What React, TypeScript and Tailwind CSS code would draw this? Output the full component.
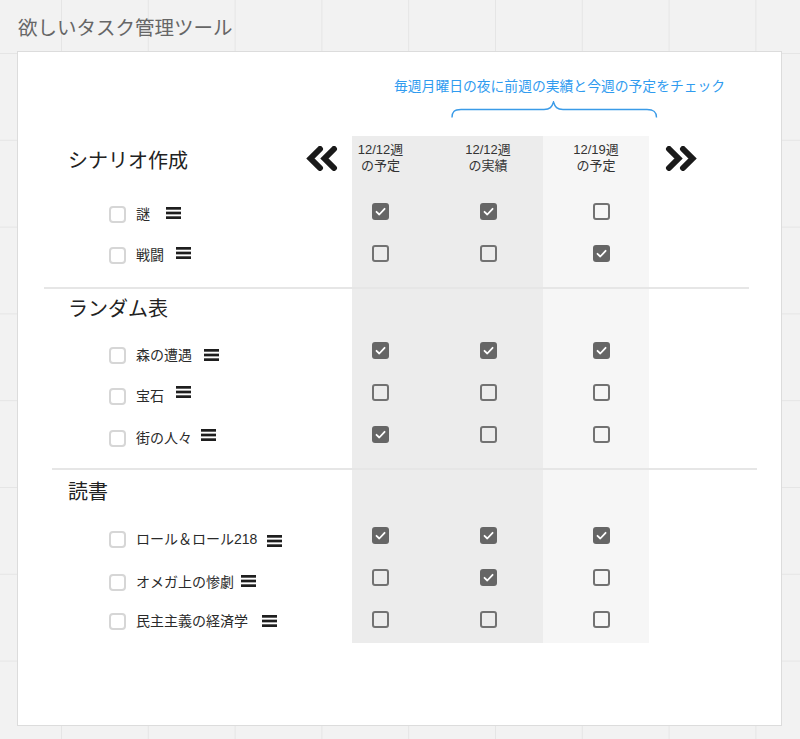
import type { ReactNode } from "react";

const SANS = "font-['Liberation_Sans','Noto_Sans_CJK_JP',sans-serif]";

type Item = { name: string; checks: boolean[]; itemCls: string; hamCls: string };

const SECTIONS: { title: string; titleH: string; items: Item[] }[] = [
  {
    title: "シナリオ作成",
    titleH: "",
    items: [
      { name: "謎", checks: [true, true, false], itemCls: "translate-y-[3px]", hamCls: "ml-[16px] -translate-y-[1px]" },
      { name: "戦闘", checks: [false, false, true], itemCls: "translate-y-[2px]", hamCls: "ml-[12px] -translate-y-[2px]" },
    ],
  },
  {
    title: "ランダム表",
    titleH: "h-[40px]",
    items: [
      { name: "森の遭遇", checks: [true, true, true], itemCls: "translate-y-[5px]", hamCls: "ml-[12px]" },
      { name: "宝石", checks: [false, false, false], itemCls: "translate-y-[4px]", hamCls: "ml-[12px] -translate-y-[4px]" },
      { name: "街の人々", checks: [true, false, false], itemCls: "translate-y-[4px]", hamCls: "ml-[9px] -translate-y-[3px]" },
    ],
  },
  {
    title: "読書",
    titleH: "h-[44px]",
    items: [
      { name: "ロール＆ロール218", checks: [true, true, true], itemCls: "translate-y-[4px]", hamCls: "ml-[10px] translate-y-[2px]" },
      { name: "オメガ上の惨劇", checks: [false, true, false], itemCls: "translate-y-[5px]", hamCls: "ml-[7px] -translate-y-[1px]" },
      { name: "民主主義の経済学", checks: [false, false, false], itemCls: "translate-y-[2px]", hamCls: "ml-[14px]" },
    ],
  },
];

function Cells({ a, b, c, d, e, h }: { a?: ReactNode; b?: ReactNode; c?: ReactNode; d?: ReactNode; e?: ReactNode; h: string }) {
  return (
    <>
      <div className={`${h} flex items-center`}>{a}</div>
      <div className="bg-[#ececec] flex items-center justify-center">{b}</div>
      <div className="bg-[#ececec] pl-6 flex items-center justify-center">{c}</div>
      <div className="bg-[#f6f6f6] pl-[10px] flex items-center justify-center">{d}</div>
      <div className="flex items-center">{e}</div>
    </>
  );
}

function Box({ on }: { on: boolean }) {
  return on ? (
    <div className="w-[17px] h-[17px] rounded-[3px] bg-[#666] flex items-center justify-center">
      <svg width="17" height="17" viewBox="0 0 17 17">
        <polyline points="4.5,8.8 7.3,11.5 12.6,5.8" fill="none" stroke="#fff" strokeWidth="1.8" strokeLinecap="round" strokeLinejoin="round" />
      </svg>
    </div>
  ) : (
    <div className="w-[17px] h-[17px] rounded-[3px] border-2 border-[#727272]" />
  );
}

function Hamburger({ cls }: { cls: string }) {
  return (
    <svg className={cls} width="15" height="12" viewBox="0 0 15 12">
      <rect x="0" y="0" width="15" height="2.7" fill="#1e1e1e" />
      <rect x="0" y="4.65" width="15" height="2.7" fill="#1e1e1e" />
      <rect x="0" y="9.3" width="15" height="2.7" fill="#1e1e1e" />
    </svg>
  );
}

function Chevrons({ dir, cls }: { dir: "left" | "right"; cls: string }) {
  const pts =
    dir === "left"
      ? ["15,3 5.5,12.5 15,22", "29,3 19.5,12.5 29,22"]
      : ["4,3 13.5,12.5 4,22", "18,3 27.5,12.5 18,22"];
  return (
    <svg className={cls} width="33" height="25" viewBox="0 0 33 25">
      {pts.map((p) => (
        <polyline key={p} points={p} fill="none" stroke="#1a1a1a" strokeWidth="6" strokeLinecap="round" strokeLinejoin="miter" />
      ))}
    </svg>
  );
}

function HeadText({ a, b, cls = "" }: { a: string; b: string; cls?: string }) {
  return (
    <div className={`self-start pt-[6px] text-center text-[13px] leading-[16px] text-[#333] ${cls}`}>
      {a}
      <br />
      {b}
    </div>
  );
}

export default function App() {
  return (
    <div
      className={`min-h-screen bg-[#f2f2f2] bg-[image:linear-gradient(90deg,#e5e5e5_1px,transparent_1px),linear-gradient(180deg,#e5e5e5_1px,transparent_1px)] bg-size-[86.8px_86.8px] bg-position-[61px_53px] pt-[14px] px-[17px] ${SANS}`}
    >
      <h1 className="pl-[1px] text-[19.5px] leading-[28px] text-[#666]">欲しいタスク管理ツール</h1>

      <div className="mt-[9px] h-[675px] w-[765px] bg-white border border-[#dcdcdc]">
        {/* annotation */}
        <div className="pt-[25px] pl-[376px] text-[13.8px] leading-[20px] text-[#2f9bef] whitespace-nowrap">
          毎週月曜日の夜に前週の実績と今週の予定をチェック
        </div>
        <svg className="mt-[4px] ml-[433px]" width="207" height="17" viewBox="0 0 207 17">
          <path
            d="M1,16.5 C1,11 3,8.5 10,8.5 L93,8.5 C99,8.5 101,6 102.5,1 C104,6 106,8.5 112,8.5 L196,8.5 C203,8.5 205.5,11 205.5,16.5"
            fill="none"
            stroke="#3a9be8"
            strokeWidth="1.4"
          />
        </svg>

        <div className="mt-[18px] grid grid-cols-[334px_57px_134px_106px_1fr]">
          {SECTIONS.map((s, si) => (
            <div key={s.title} className="contents">
              {si === 0 ? (
                <Cells
                  h="h-[54px] items-start justify-between"
                  a={
                    <>
                      <span className="pl-[50px] pt-[11px] text-[20px] leading-[28px] text-[#222]">{s.title}</span>
                      <Chevrons dir="left" cls="mt-[10px] mr-[14px]" />
                    </>
                  }
                  b={<HeadText a="12/12週" b="の予定" />}
                  c={<HeadText a="12/12週" b="の実績" />}
                  d={<HeadText a="12/19週" b="の予定" cls="-ml-[10px]" />}
                  e={<Chevrons dir="right" cls="self-start mt-[10px] ml-[16px]" />}
                />
              ) : (
                <>
                  <Cells h="h-[13px]" />
                  <div className="col-span-5 h-[2px]">
                    <div className={`h-[2px] w-[705px] bg-[#e6e6e6] ${si === 1 ? "ml-[26px]" : "ml-[34px]"}`} />
                  </div>
                  <Cells
                    h={s.titleH}
                    a={<span className="pl-[50px] text-[20px] leading-[28px] text-[#222]">{s.title}</span>}
                  />
                </>
              )}
              {s.items.map((it) => (
                <Cells
                  key={it.name}
                  h="h-[42px]"
                  a={
                    <div className={`pl-[91px] flex items-center ${it.itemCls}`}>
                      <div className="w-[17px] h-[17px] rounded-[4px] border-2 border-[#d6d6d6]" />
                      <span className="ml-[10px] text-[14px] leading-[20px] text-[#2a2a2a] whitespace-nowrap">{it.name}</span>
                      <Hamburger cls={it.hamCls} />
                    </div>
                  }
                  b={<Box on={it.checks[0]} />}
                  c={<Box on={it.checks[1]} />}
                  d={<Box on={it.checks[2]} />}
                />
              ))}
            </div>
          ))}
          <Cells h="h-[3px]" />
        </div>
      </div>
    </div>
  );
}
